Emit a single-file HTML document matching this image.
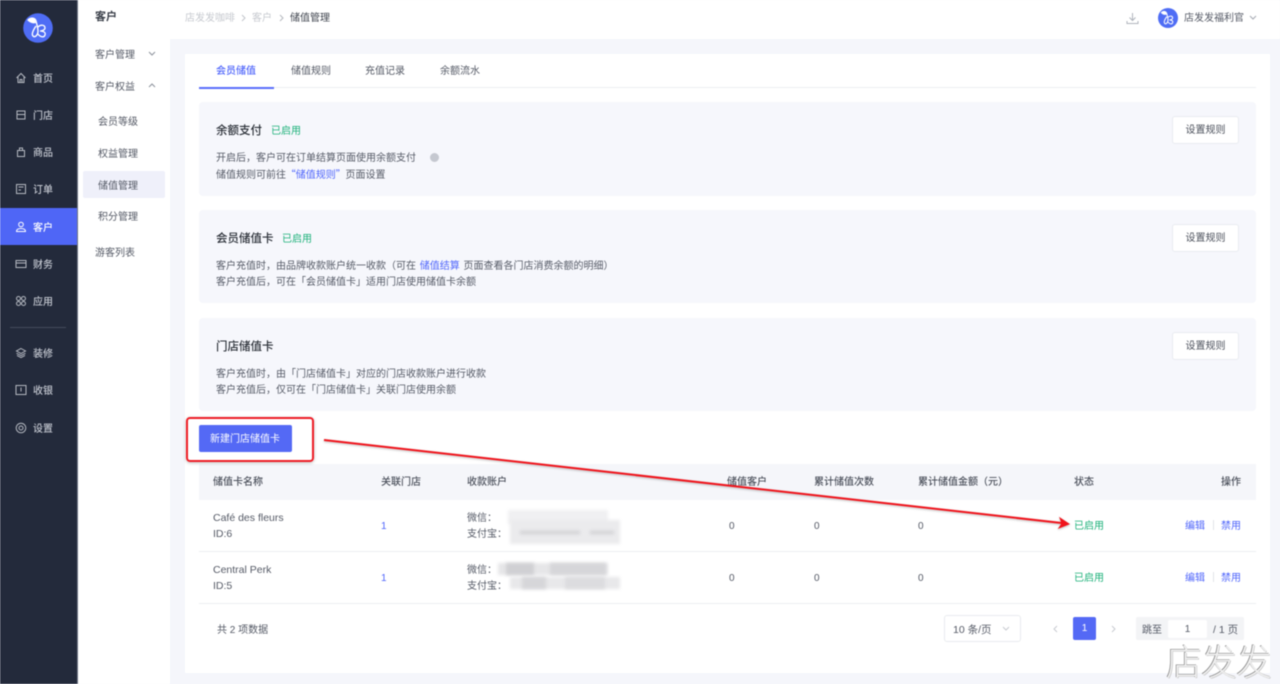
<!DOCTYPE html>
<html lang="zh-CN"><head><meta charset="utf-8"><title>储值管理</title>
<style>
*{box-sizing:border-box}
html,body{margin:0;padding:0;width:1280px;height:684px;overflow:hidden;background:#f5f6fb}
#p{position:relative;width:1280px;height:684px;overflow:hidden;font:10px/14px "Liberation Sans","Noto Sans CJK SC",sans-serif;color:#555a66;filter:blur(.4px)}
.b{position:absolute}
.t{position:absolute;white-space:nowrap;line-height:14px;margin-top:2px}
.n{color:#c2c6cf}
.s{color:#555a66}
.h{color:#4c515c;font-weight:500}
.m{color:#2b3038;font-weight:500;font-size:11.5px}
.g{color:#1fb27b}
.l{color:#5066fb}
.q{font-family:"Noto Sans CJK SC",sans-serif}
.en{font-size:10.5px}
.btn{position:absolute;left:1172px;width:67px;height:28px;background:#fff;border:1px solid #e9ebf0;border-radius:3px;text-align:center;line-height:28px;color:#4c515c}
.ic{position:absolute;left:15px;width:12px;height:12px;fill:none;stroke:#b4b8c0;stroke-width:1}
.blr{position:absolute;background:#dcdcde;filter:blur(1.5px)}
</style></head><body><div id="p">

<div class="b" style="left:0;top:0;width:77px;height:684px;background:#232a3b"></div>
<div class="b" style="left:77px;top:0;width:1px;height:684px;background:#6d7382"></div>
<div class="b" style="left:78px;top:0;width:92px;height:684px;background:#fff"></div>
<div class="b" style="left:170px;top:0;width:1110px;height:39px;background:#fff"></div>
<div class="b" style="left:185px;top:54px;width:1085px;height:619px;background:#fff"></div>

<svg class="b" style="left:23px;top:13px" width="30" height="30" viewBox="0 0 30 30"><circle cx="15" cy="15" r="14.8" fill="#4f6df5"/><path d="M5 7C8 4 12 5 13 8C14 12 15 15 15 18C15 22 12 25 10 23C8 21 11 16 13 13" fill="none" stroke="#fff" stroke-width="1.4"/><path d="M4 7C7 10 10 11 13 10L11 5Z" fill="#fff"/><path d="M15 14C18 11 22 12 22 15C22 17 19 18 17 18C20 18 23 19 22 22C21 25 17 24 15 21" fill="none" stroke="#fff" stroke-width="1.3"/></svg>

<div class="b" style="left:0;top:208px;width:77px;height:37px;background:#4f66f6"></div>
<div class="b" style="left:10px;top:327px;width:56px;height:1px;background:#444b5c"></div>

<svg class="ic" style="top:72px" viewBox="0 0 12 12"><path d="M1.500 6L6 1.500L10.500 6M3 5V10.500H9V5M5 10.500V7.500H7V10.500"/></svg>
<div class="t n" style="left:33px;top:71px;font-weight:500">首页</div>
<svg class="ic" style="top:109px" viewBox="0 0 12 12"><path d="M2 2H10V10H2ZM2 5.500H10"/></svg>
<div class="t n" style="left:33px;top:108px;font-weight:500">门店</div>
<svg class="ic" style="top:146px" viewBox="0 0 12 12"><path d="M2.500 4.500H9.500V10.500H2.500ZM4.500 4.500V2H7.500V4.500"/></svg>
<div class="t n" style="left:33px;top:145px;font-weight:500">商品</div>
<svg class="ic" style="top:183px" viewBox="0 0 12 12"><path d="M1.500 1.500H10.500V10.500H1.500ZM3.500 4H8.500M3.500 7H6"/></svg>
<div class="t n" style="left:33px;top:182px;font-weight:500">订单</div>
<svg class="ic" style="top:221px;stroke:#fff" viewBox="0 0 12 12"><circle cx="6" cy="3.500" r="2.300"/><path d="M1.500 10.500C1.500 8 3.500 7.500 6 7.500S10.500 8 10.500 10.500Z"/></svg>
<div class="t" style="left:33px;top:220px;color:#fff;font-weight:500">客户</div>
<svg class="ic" style="top:258px" viewBox="0 0 12 12"><path d="M1 2.500H11V9.500H1ZM1 5H11"/></svg>
<div class="t n" style="left:33px;top:257px;font-weight:500">财务</div>
<svg class="ic" style="top:295px" viewBox="0 0 12 12"><circle cx="3.500" cy="3.500" r="2"/><circle cx="8.500" cy="3.500" r="2"/><circle cx="3.500" cy="8.500" r="2"/><circle cx="8.500" cy="8.500" r="2"/></svg>
<div class="t n" style="left:33px;top:294px;font-weight:500">应用</div>
<svg class="ic" style="top:347px" viewBox="0 0 12 12"><path d="M6 1.500L10.500 4L6 6.500L1.500 4ZM1.500 6.300L6 8.600L10.500 6.300M2 8.400L6 10.600L10 8.400"/></svg>
<div class="t n" style="left:33px;top:346px;font-weight:500">装修</div>
<svg class="ic" style="top:384px" viewBox="0 0 12 12"><path d="M1 1.500H11V10.500H1ZM6 3.500V7.500"/></svg>
<div class="t n" style="left:33px;top:383px;font-weight:500">收银</div>
<svg class="ic" style="top:422px" viewBox="0 0 12 12"><circle cx="6" cy="6" r="4.800"/><circle cx="6" cy="6" r="2"/></svg>
<div class="t n" style="left:33px;top:421px;font-weight:500">设置</div>

<div class="t" style="left:95px;top:8px;font-size:11px;color:#3a3f49;font-weight:700">客户</div>
<div class="t s" style="left:95px;top:47px">客户管理</div>
<svg class="b" style="left:148px;top:51px" width="8" height="6"><path d="M1 1L4 4L7 1" fill="none" stroke="#8d929c"/></svg>
<div class="t s" style="left:95px;top:79px">客户权益</div>
<svg class="b" style="left:148px;top:83px" width="8" height="6"><path d="M1 4L4 1L7 4" fill="none" stroke="#8d929c"/></svg>
<div class="t s" style="left:98px;top:114px">会员等级</div>
<div class="t s" style="left:98px;top:146px">权益管理</div>
<div class="b" style="left:83px;top:171px;width:82px;height:27px;border-radius:2px;background:#eff0fa"></div>
<div class="t s" style="left:98px;top:178px">储值管理</div>
<div class="t s" style="left:98px;top:209px">积分管理</div>
<div class="t s" style="left:95px;top:245px">游客列表</div>

<div class="t" style="left:185px;top:10px;color:#c6c9cf">店发发咖啡</div>
<svg class="b" style="left:241px;top:14px" width="6" height="8"><path d="M1 1L4 4L1 7" fill="none" stroke="#c2c5cb"/></svg>
<div class="t" style="left:252px;top:10px;color:#c6c9cf">客户</div>
<svg class="b" style="left:279px;top:14px" width="6" height="8"><path d="M1 1L4 4L1 7" fill="none" stroke="#b5b8bf"/></svg>
<div class="t" style="left:290px;top:10px;color:#3f444e">储值管理</div>

<svg class="b" style="left:1126px;top:12px" width="13" height="13" viewBox="0 0 13 13"><path d="M6.500 1V8.500M3.500 5.500L6.500 8.500L9.500 5.500M1 9V11.500H12V9" fill="none" stroke="#b0b4bc"/></svg>
<svg class="b" style="left:1158px;top:8px" width="20" height="20" viewBox="0 0 30 30"><circle cx="15" cy="15" r="15" fill="#4f6df5"/><path d="M5 7C8 4 12 5 13 8C14 12 15 15 15 18C15 22 12 25 10 23C8 21 11 16 13 13" fill="none" stroke="#fff" stroke-width="1.600"/><path d="M4 7C7 10 10 11 13 10L11 5Z" fill="#fff"/><path d="M15 14C18 11 22 12 22 15C22 17 19 18 17 18C20 18 23 19 22 22C21 25 17 24 15 21" fill="none" stroke="#fff" stroke-width="1.500"/></svg>
<div class="t" style="left:1184px;top:10px;color:#555a66">店发发福利官</div>
<svg class="b" style="left:1249px;top:15px" width="8" height="6"><path d="M1 1L4 4L7 1" fill="none" stroke="#a5a9b2"/></svg>

<div class="t l" style="left:216px;top:63px;font-weight:500">会员储值</div>
<div class="t s" style="left:291px;top:63px">储值规则</div>
<div class="t s" style="left:365px;top:63px">充值记录</div>
<div class="t s" style="left:440px;top:63px">余额流水</div>
<div class="b" style="left:199px;top:87px;width:1057px;height:1px;background:#eceef2"></div>
<div class="b" style="left:199px;top:87px;width:75px;height:1.500px;background:#5a6efb"></div>

<div class="b" style="left:199px;top:102px;width:1057px;height:94px;border-radius:4px;background:#f6f7fc"></div>
<div class="t m" style="left:216px;top:122px">余额支付</div>
<div class="t g" style="left:271px;top:123px">已启用</div>
<div class="t s" style="left:216px;top:150px">开启后，客户可在订单结算页面使用余额支付</div>
<div class="b" style="left:430px;top:153px;width:9px;height:9px;border-radius:50%;background:#c5c8d0"></div>
<div class="t s" style="left:216px;top:165px">储值规则可前往 <span class="l q" style="margin:0 -3px">“储值规则”</span> 页面设置</div>
<div class="btn" style="top:116px">设置规则</div>

<div class="b" style="left:199px;top:210px;width:1057px;height:93px;border-radius:4px;background:#f6f7fc"></div>
<div class="t m" style="left:216px;top:230px">会员储值卡</div>
<div class="t g" style="left:282px;top:231px">已启用</div>
<div class="t s" style="left:216px;top:258px">客户充值时，由品牌收款账户统一收款（可在 <span class="l" style="margin:0 1px">储值结算</span> 页面查看各门店消费余额的明细）</div>
<div class="t s" style="left:216px;top:274px">客户充值后，可在「会员储值卡」适用门店使用储值卡余额</div>
<div class="btn" style="top:224px">设置规则</div>

<div class="b" style="left:199px;top:318px;width:1057px;height:93px;border-radius:4px;background:#f6f7fc"></div>
<div class="t m" style="left:216px;top:338px">门店储值卡</div>
<div class="t s" style="left:216px;top:366px">客户充值时，由「门店储值卡」对应的门店收款账户进行收款</div>
<div class="t s" style="left:216px;top:382px">客户充值后，仅可在「门店储值卡」关联门店使用余额</div>
<div class="btn" style="top:332px">设置规则</div>

<div class="b" style="left:199px;top:425px;width:93px;height:27px;border-radius:2px;background:#5469f5"></div>
<div class="t" style="left:210px;top:431px;color:#fff">新建门店储值卡</div>

<div class="b" style="left:199px;top:464px;width:1057px;height:36px;background:#f5f6fa"></div>
<div class="t h" style="left:213px;top:474px">储值卡名称</div>
<div class="t h" style="left:381px;top:474px">关联门店</div>
<div class="t h" style="left:467px;top:474px">收款账户</div>
<div class="t h" style="left:727px;top:474px">储值客户</div>
<div class="t h" style="left:814px;top:474px">累计储值次数</div>
<div class="t h" style="left:918px;top:474px">累计储值金额（元）</div>
<div class="t h" style="left:1074px;top:474px">状态</div>
<div class="t h" style="left:1221px;top:474px">操作</div>

<div class="b" style="left:199px;top:551px;width:1057px;height:1px;background:#eceef1"></div>
<div class="b" style="left:199px;top:603px;width:1057px;height:1px;background:#eceef1"></div>

<div class="t s en" style="left:213px;top:509px">Café des fleurs</div>
<div class="t s en" style="left:213px;top:525px">ID:6</div>
<div class="t l" style="left:381px;top:518px">1</div>
<div class="t s" style="left:467px;top:510px">微信：</div>
<div class="t s" style="left:467px;top:526px">支付宝：</div>
<div class="blr" style="left:508px;top:510px;width:100px;height:14px;background:#f0f0f2"></div>
<div class="blr" style="left:510px;top:520px;width:110px;height:24px;background:#ebebed"></div>
<div class="blr" style="left:520px;top:531px;width:60px;height:3px;background:#cfcfd2"></div>
<div class="blr" style="left:590px;top:531px;width:24px;height:3px;background:#cfcfd2"></div>
<div class="t s" style="left:729px;top:518px">0</div>
<div class="t s" style="left:814px;top:518px">0</div>
<div class="t s" style="left:918px;top:518px">0</div>
<div class="t g" style="left:1074px;top:518px">已启用</div>
<div class="t l" style="left:1185px;top:518px">编辑</div>
<div class="b" style="left:1213px;top:520px;width:1px;height:10px;background:#e2e4e9"></div>
<div class="t l" style="left:1221px;top:518px">禁用</div>

<div class="t s en" style="left:213px;top:561px">Central Perk</div>
<div class="t s en" style="left:213px;top:577px">ID:5</div>
<div class="t l" style="left:381px;top:570px">1</div>
<div class="t s" style="left:467px;top:562px">微信：</div>
<div class="t s" style="left:467px;top:578px">支付宝：</div>
<div class="blr" style="left:498px;top:563px;width:110px;height:12px;background:#e6e6e8"></div>
<div class="blr" style="left:506px;top:563px;width:28px;height:12px;background:#d0d0d3"></div>
<div class="blr" style="left:550px;top:563px;width:56px;height:12px;background:#d6d6d9"></div>
<div class="blr" style="left:510px;top:577px;width:110px;height:12px;background:#e8e8ea"></div>
<div class="blr" style="left:522px;top:577px;width:24px;height:12px;background:#d6d6d9"></div>
<div class="blr" style="left:565px;top:577px;width:40px;height:12px;background:#dcdcdf"></div>
<div class="t s" style="left:729px;top:570px">0</div>
<div class="t s" style="left:814px;top:570px">0</div>
<div class="t s" style="left:918px;top:570px">0</div>
<div class="t g" style="left:1074px;top:570px">已启用</div>
<div class="t l" style="left:1185px;top:570px">编辑</div>
<div class="b" style="left:1213px;top:572px;width:1px;height:10px;background:#e2e4e9"></div>
<div class="t l" style="left:1221px;top:570px">禁用</div>

<div class="t s" style="left:217px;top:622px">共 2 项数据</div>
<div class="b" style="left:944px;top:615px;width:77px;height:27px;border:1px solid #e9ebef;border-radius:3px"></div>
<div class="t s en" style="left:953px;top:621px">10 条/页</div>
<svg class="b" style="left:1002px;top:626px" width="8" height="6"><path d="M1 1L4 4L7 1" fill="none" stroke="#c8cbd1"/></svg>
<svg class="b" style="left:1053px;top:625px" width="6" height="8"><path d="M4 1L1 4L4 7" fill="none" stroke="#c8cbd1"/></svg>
<div class="b" style="left:1073px;top:617px;width:23px;height:23px;border-radius:2px;background:#5469f5;color:#fff;text-align:center;line-height:24px">1</div>
<svg class="b" style="left:1111px;top:625px" width="6" height="8"><path d="M1 1L4 4L1 7" fill="none" stroke="#c8cbd1"/></svg>
<div class="b" style="left:1136px;top:617px;width:108px;height:23px;border-radius:2px;background:#f3f4f6"></div>
<div class="t s" style="left:1142px;top:622px">跳至</div>
<div class="b" style="left:1168px;top:620px;width:39px;height:18px;border-radius:2px;background:#fff;text-align:center;line-height:19px;color:#555a66">1</div>
<div class="t s en" style="left:1213px;top:621px">/ 1 页</div>

<div class="b" style="left:186px;top:417px;width:128px;height:45px;border:2px solid #ee1c25;border-radius:4px;box-shadow:0 1px 3px rgba(0,0,0,.25)"></div>
<svg class="b" style="left:0;top:0;filter:drop-shadow(0 1px 1px rgba(0,0,0,.25))" width="1280" height="684"><path d="M324 440L1066 523.500" stroke="#f0141c" stroke-width="2" fill="none"/><path d="M1060 518L1069 524L1059 528L1062 523.500Z" fill="#f0141c" stroke="#f0141c"/></svg>

<div class="t" style="left:1166px;top:639px;margin-top:0;font-size:36px;line-height:42px;letter-spacing:-1px;font-weight:200;color:#efefef;font-family:'Noto Sans CJK SC',sans-serif;text-shadow:-.6px -.6px 0 #7c7c7c,.5px .5px 0 #bdbdbd">店发发</div>
</div></body></html>
